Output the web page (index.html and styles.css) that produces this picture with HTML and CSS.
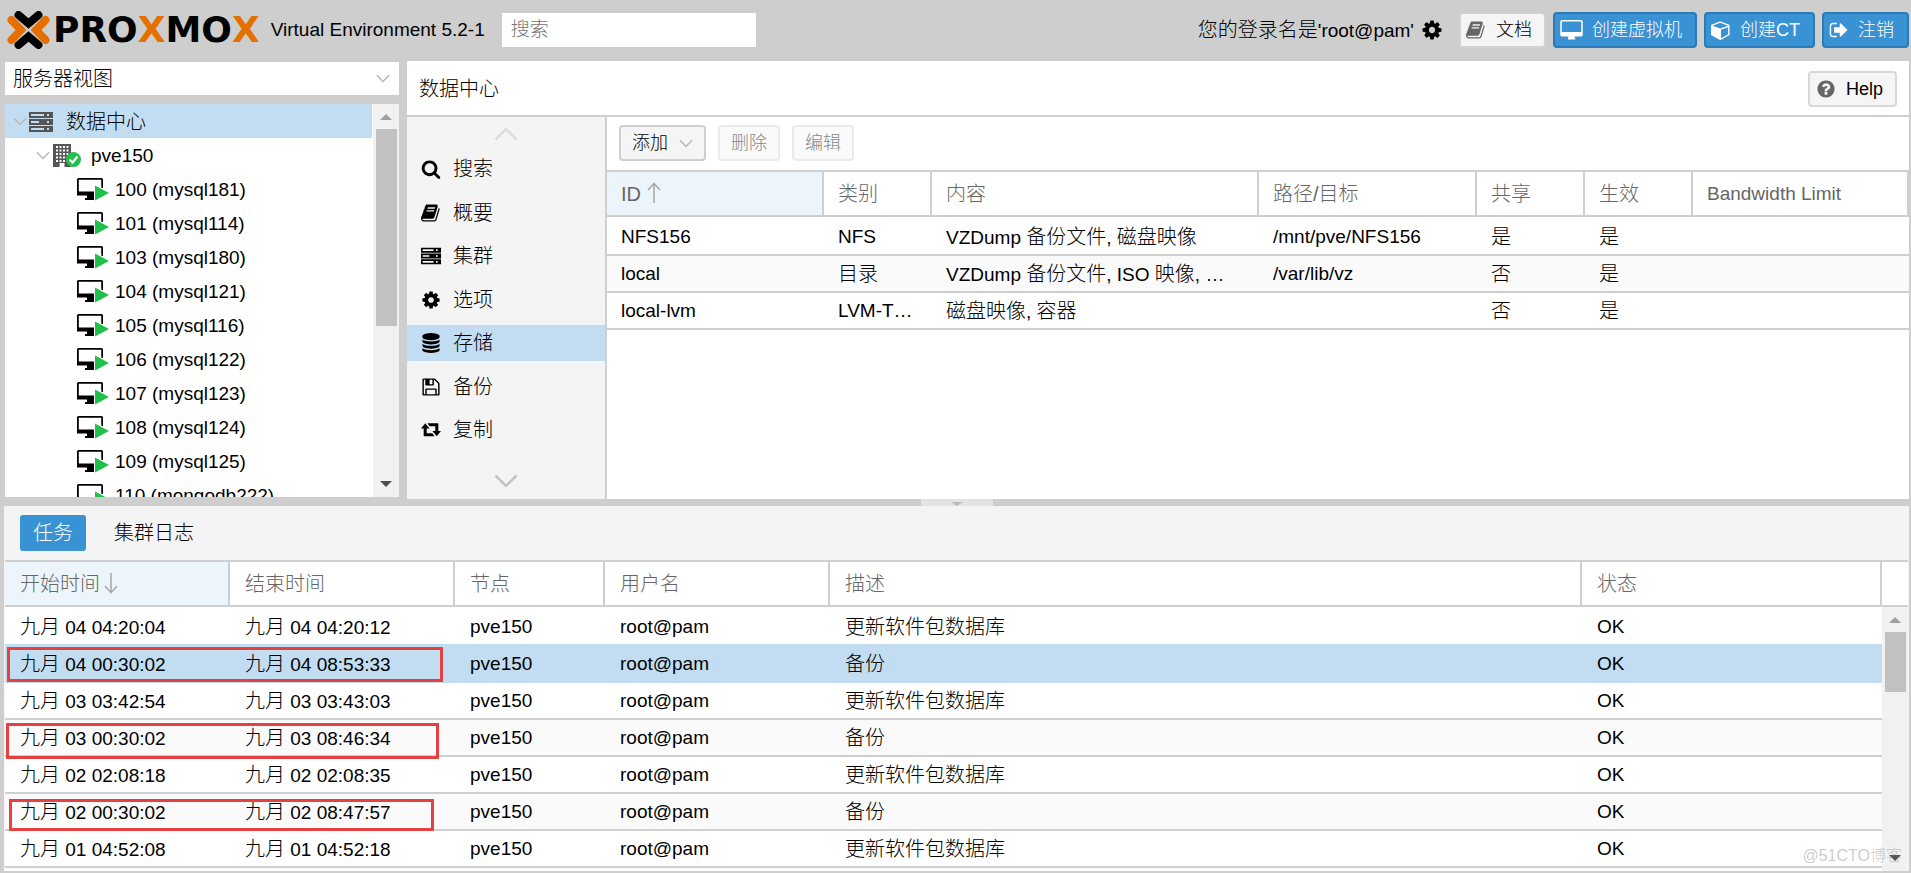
FILE: index.html
```html
<!DOCTYPE html>
<html lang="zh-CN">
<head>
<meta charset="utf-8">
<meta name="viewport" content="width=device-width, initial-scale=1">
<title>Proxmox Virtual Environment</title>
<link rel="stylesheet" href="styles.css">
</head>
<body>
<svg class="sprite" aria-hidden="true">
  <symbol id="i-cog" viewBox="0 0 1792 1792"><path d="M1152 896q0-106-75-181t-181-75-181 75-75 181 75 181 181 75 181-75 75-181zm512-109v222q0 12-8 23t-20 13l-185 28q-19 54-39 91 35 50 107 138 10 12 10 25t-9 23q-27 37-99 108t-94 71q-12 0-26-9l-138-108q-44 23-91 38-16 136-29 186-7 28-36 28h-222q-14 0-24.5-8.5t-11.5-21.5l-28-184q-49-16-90-37l-141 107q-10 9-25 9-14 0-25-11-126-114-165-168-7-10-7-23 0-12 8-23 15-21 51-66.5t54-70.5q-27-50-41-99l-183-27q-13-2-21-12.5t-8-23.5v-222q0-12 8-23t19-13l186-28q14-46 39-92-40-57-107-138-10-12-10-24 0-10 9-23 26-36 98.5-107.5t94.5-71.5q13 0 26 10l138 107q44-23 91-38 16-136 29-186 7-28 36-28h222q14 0 24.5 8.5t11.5 21.5l28 184q49 16 90 37l142-107q9-9 24-9 13 0 25 10 129 119 165 170 7 8 7 22 0 12-8 23-15 21-51 66.5t-54 70.5q26 50 41 98l183 28q13 2 21 12.5t8 23.5z"/></symbol>
  <symbol id="i-book" viewBox="0 0 1792 1792"><path d="M1639 478q40 57 18 129l-275 906q-19 64-76.5 107.5t-122.5 43.5h-923q-77 0-148.5-53.5t-99.5-131.5q-24-67-2-127 0-4 3-27t4-37q1-8-3-21.5t-3-19.5q2-11 8-21t16.5-23.5 16.5-23.5q23-38 45-91.5t30-91.5q3-10 .5-30t-.5-28q3-11 17-28t17-23q21-36 42-92t25-90q1-9-2.5-32t.5-28q4-13 22-30.5t22-22.5q19-26 42.5-84.5t27.5-96.5q1-8-3-25.5t-2-26.5q2-8 9-18t18-23 17-21q8-12 16.5-30.5t15-35 16-36 19.5-32 26.5-23.5 36-11.5 47.5 5.5l-1 3q38-9 51-9h761q74 0 114 56t18 130l-274 906q-36 119-71.5 153.5t-128.5 34.5h-869q-27 0-38 15-11 16-1 43 24 70 144 70h923q29 0 56-15.5t35-41.5l300-987q7-22 5-57 38 15 59 43zm-1064 2q-4 13 2 22.5t20 9.5h608q13 0 25.5-9.5t16.5-22.5l21-64q4-13-2-22.5t-20-9.5h-608q-13 0-25.5 9.5t-16.5 22.5zm-83 256q-4 13 2 22.5t20 9.5h608q13 0 25.5-9.5t16.5-22.5l21-64q4-13-2-22.5t-20-9.5h-608q-13 0-25.5 9.5t-16.5 22.5z"/></symbol>
  <symbol id="i-desktop" viewBox="-64 0 1920 1792"><path d="M1728 992v-832q0-13-9.5-22.5t-22.5-9.5h-1600q-13 0-22.5 9.5t-9.5 22.5v832q0 13 9.5 22.5t22.5 9.5h1600q13 0 22.5-9.5t9.5-22.5zm128-832v1088q0 66-47 113t-113 47h-544q0 37 16 77.5t32 71 16 43.5q0 26-19 45t-45 19h-512q-26 0-45-19t-19-45q0-14 16-44t32-70 16-78h-544q-66 0-113-47t-47-113v-1088q0-66 47-113t113-47h1600q66 0 113 47t47 113z"/></symbol>
  <symbol id="i-cube" viewBox="0 0 1792 1792"><path d="M896 1629l640-349v-636l-640 233v752zm-64-865l698-254-698-254-698 254zm832-252v768q0 35-18 65t-49 47l-704 384q-28 16-61 16t-61-16l-704-384q-31-17-49-47t-18-65v-768q0-40 23-73t61-47l704-256q22-8 44-8t44 8l704 256q38 14 61 47t23 73z"/></symbol>
  <symbol id="i-signout" viewBox="0 0 1792 1792"><path d="M704 1440q0 4 1 20t.5 26.5-3 23.5-10 19.5-20.5 6.5h-320q-119 0-203.5-84.5t-84.5-203.5v-704q0-119 84.5-203.5t203.5-84.5h320q13 0 22.5 9.5t9.5 22.5q0 4 1 20t.5 26.5-3 23.5-10 19.5-20.5 6.5h-320q-66 0-113 47t-47 113v704q0 66 47 113t113 47h312l11.5 1 11.5 3 8 5.5 7 9 2 13.5zm928-544q0 26-19 45l-544 544q-19 19-45 19t-45-19-19-45v-288h-448q-26 0-45-19t-19-45v-384q0-26 19-45t45-19h448v-288q0-26 19-45t45-19 45 19l544 544q19 19 19 45z"/></symbol>
  <symbol id="i-question" viewBox="0 0 1792 1792"><path d="M1024 1376v-192q0-14-9-23t-23-9h-192q-14 0-23 9t-9 23v192q0 14 9 23t23 9h192q14 0 23-9t9-23zm256-672q0-88-55.5-163t-138.5-116-170-41q-243 0-371 213-15 24 8 42l132 100q7 6 19 6 16 0 25-12 53-68 86-92 34-24 86-24 48 0 85.5 26t37.5 59q0 38-20 61t-68 45q-63 28-115.5 86.5t-52.5 125.5v36q0 14 9 23t23 9h192q14 0 23-9t9-23q0-19 21.5-49.5t54.5-49.5q32-18 49-28.5t46-35 44.5-48 28-60.5 12.5-81zm384 192q0 209-103 385.5t-279.5 279.5-385.5 103-385.5-103-279.5-279.5-103-385.5 103-385.5 279.5-279.5 385.5-103 385.5 103 279.5 279.5 103 385.5z"/></symbol>
  <symbol id="i-search" viewBox="0 0 1792 1792"><path d="M1216 832q0-185-131.5-316.5t-316.5-131.5-316.5 131.5-131.5 316.5 131.5 316.5 316.5 131.5 316.5-131.5 131.5-316.5zm512 832q0 52-38 90t-90 38q-54 0-90-38l-343-342q-179 124-399 124-143 0-273.5-55.5t-225-150-150-225-55.5-273.5 55.5-273.5 150-225 225-150 273.5-55.5 273.5 55.5 225 150 150 225 55.5 273.5q0 220-124 399l343 343q37 37 37 90z"/></symbol>
  <symbol id="i-database" viewBox="0 0 1792 1792"><path d="M896 768q237 0 443-43t325-127v170q0 69-103 128t-280 93.5-385 34.5-385-34.5-280-93.5-103-128v-170q119 84 325 127t443 43zm0 768q237 0 443-43t325-127v170q0 69-103 128t-280 93.5-385 34.5-385-34.5-280-93.5-103-128v-170q119 84 325 127t443 43zm0-384q237 0 443-43t325-127v170q0 69-103 128t-280 93.5-385 34.5-385-34.5-280-93.5-103-128v-170q119 84 325 127t443 43zm0-1152q208 0 385 34.5t280 93.5 103 128v128q0 69-103 128t-280 93.5-385 34.5-385-34.5-280-93.5-103-128v-128q0-69 103-128t280-93.5 385-34.5z"/></symbol>
  <symbol id="i-floppy" viewBox="0 0 1792 1792"><path d="M512 1536h768v-384h-768v384zm896 0h128v-896q0-14-10-38.5t-20-34.5l-281-281q-10-10-34-20t-39-10v416q0 40-28 68t-68 28h-576q-40 0-68-28t-28-68v-416h-128v1280h128v-416q0-40 28-68t68-28h832q40 0 68 28t28 68v416zm-384-928v-320q0-13-9.5-22.5t-22.5-9.5h-192q-13 0-22.5 9.5t-9.5 22.5v320q0 13 9.5 22.5t22.5 9.5h192q13 0 22.5-9.5t9.5-22.5zm640 32v928q0 40-28 68t-68 28h-1344q-40 0-68-28t-28-68v-1344q0-40 28-68t68-28h928q40 0 88 20t76 48l280 280q28 28 48 76t20 88z"/></symbol>
  <symbol id="i-server" viewBox="0 0 24 20"><path fill-rule="evenodd" d="M0 0h24v6H0zM2 2v2h13V2zM18 2v2h2V2zM0 7h24v6H0zM2 9v2h8V9zM18 9v2h2V9zM0 14h24v6H0zM2 16v2h13v-2zM18 16v2h2v-2z"/></symbol>
  <symbol id="i-retweet" viewBox="0 0 21 14"><path d="M4.500 0L9 5.500H6V10.500H12L14.200 13.500H3.500Q2.800 13.500 2.800 12.800V5.500H0zM16.500 13.500L12 8H15V3H9L6.800 0H17.500Q18.200 0 18.200 .7V8H21z"/></symbol>
  <symbol id="i-chevron" viewBox="0 0 24 14"><path d="M1.500 1.500L12 12 22.500 1.500" fill="none" stroke="currentColor" stroke-width="2.500"/></symbol>
  <symbol id="i-sort" viewBox="0 0 14 22"><path d="M7 21V2M1 8L7 1.500 13 8" fill="none" stroke="#aaa" stroke-width="1.600"/></symbol>
  <symbol id="i-node" viewBox="0 0 28 24"><path fill="#555" d="M0 0h18v23H0z"/><path d="M4 2v16M7.500 2v16M11 2v16M14.500 2v16" stroke="#fff" stroke-width="2" stroke-dasharray="2 1.500"/><path fill="#fff" d="M6.500 19h5v4h-5z"/><circle cx="20.500" cy="15.500" r="7.500" fill="#21bf4b"/><path d="M16.500 15.500l3 3 5-6" fill="none" stroke="#fff" stroke-width="2.200"/></symbol>
  <symbol id="i-vm" viewBox="0 0 32 24"><path fill-rule="evenodd" d="M1.500 0h23Q26 0 26 1.500V17.500H17V20h1.500v2H8v-2h2V17.500H0V1.500Q0 0 1.500 0zM1.800 1.800V13.500H24.500V1.800z"/><path fill="#fff" d="M17 6l4 0 5 3v13h-9z"/><path d="M25.200 2v8" stroke="#000" stroke-width="1.500"/><path fill="#21bf4b" d="M18 7.500L32 15 18 22.500z"/></symbol>
</svg>

<header class="topbar">
  <a class="logo" href="#" aria-label="Proxmox">
    <svg class="logo-mark" viewBox="0 0 43 38" fill="none" stroke-width="8" stroke-linecap="round" stroke-linejoin="miter">
      <path stroke="#e57000" d="M4.500 9L14 19 4.500 29M38.500 9L29 19 38.500 29"/>
      <path stroke="#000" d="M11.500 4L21.500 12.500 31.500 4M11.500 34L21.500 25.500 31.500 34"/>
    </svg>
    <span class="logo-word">PRO<b>X</b>MO<b>X</b></span>
  </a>
  <span class="version">Virtual Environment 5.2-1</span>
  <input class="search" type="text" placeholder="搜索" aria-label="搜索">
  <div class="session">
    <span class="login"><span class="zh">您的登录名是</span>'root@pam'</span>
    <svg class="ico ico-cog"><use href="#i-cog"/></svg>
  </div>
  <button class="btn btn-doc"><svg class="ico"><use href="#i-book"/></svg>文档</button>
  <button class="btn btn-blue"><svg class="ico ico-wide"><use href="#i-desktop"/></svg>创建虚拟机</button>
  <button class="btn btn-blue"><svg class="ico"><use href="#i-cube"/></svg>创建CT</button>
  <button class="btn btn-blue"><svg class="ico"><use href="#i-signout"/></svg>注销</button>
</header>

<main class="workspace">
  <aside class="sidebar">
    <button class="view-select" aria-haspopup="listbox"><span>服务器视图</span><svg class="chev"><use href="#i-chevron"/></svg></button>
    <div class="tree-box">
      <ul class="tree">
        <li class="lvl0 selected"><svg class="chev"><use href="#i-chevron"/></svg><svg class="t-server"><use href="#i-server"/></svg><span class="zh">数据中心</span></li>
        <li class="lvl1"><svg class="chev"><use href="#i-chevron"/></svg><svg class="t-node"><use href="#i-node"/></svg>pve150</li>
        <li class="lvl2"><svg class="t-vm"><use href="#i-vm"/></svg>100 (mysql181)</li>
        <li class="lvl2"><svg class="t-vm"><use href="#i-vm"/></svg>101 (mysql114)</li>
        <li class="lvl2"><svg class="t-vm"><use href="#i-vm"/></svg>103 (mysql180)</li>
        <li class="lvl2"><svg class="t-vm"><use href="#i-vm"/></svg>104 (mysql121)</li>
        <li class="lvl2"><svg class="t-vm"><use href="#i-vm"/></svg>105 (mysql116)</li>
        <li class="lvl2"><svg class="t-vm"><use href="#i-vm"/></svg>106 (mysql122)</li>
        <li class="lvl2"><svg class="t-vm"><use href="#i-vm"/></svg>107 (mysql123)</li>
        <li class="lvl2"><svg class="t-vm"><use href="#i-vm"/></svg>108 (mysql124)</li>
        <li class="lvl2"><svg class="t-vm"><use href="#i-vm"/></svg>109 (mysql125)</li>
        <li class="lvl2"><svg class="t-vm"><use href="#i-vm"/></svg>110 (mongodb222)</li>
      </ul>
      <div class="scrollbar"><i class="arrow up"></i><i class="thumb thumb-tree"></i><i class="arrow down"></i></div>
    </div>
  </aside>

  <section class="content">
    <div class="titlebar"><h1>数据中心</h1><button class="btn btn-help"><svg class="ico"><use href="#i-question"/></svg>Help</button></div>
    <div class="content-body">
      <nav class="menu">
        <svg class="menu-scroll faded"><use href="#i-chevron"/></svg>
        <ul>
          <li><a href="#"><svg class="ico"><use href="#i-search"/></svg>搜索</a></li>
          <li><a href="#"><svg class="ico"><use href="#i-book"/></svg>概要</a></li>
          <li><a href="#"><svg class="ico"><use href="#i-server"/></svg>集群</a></li>
          <li><a href="#"><svg class="ico"><use href="#i-cog"/></svg>选项</a></li>
          <li><a href="#" class="selected"><svg class="ico"><use href="#i-database"/></svg>存储</a></li>
          <li><a href="#"><svg class="ico"><use href="#i-floppy"/></svg>备份</a></li>
          <li><a href="#"><svg class="ico"><use href="#i-retweet"/></svg>复制</a></li>
        </ul>
        <svg class="menu-scroll"><use href="#i-chevron"/></svg>
      </nav>
      <div class="storage">
        <div class="toolbar">
          <button class="btn btn-add">添加<svg class="chev"><use href="#i-chevron"/></svg></button>
          <button class="btn" disabled>删除</button>
          <button class="btn" disabled>编辑</button>
        </div>
        <table class="grid grid-storage">
          <colgroup><col class="w-id"><col class="w-flag"><col class="w-content"><col class="w-path"><col class="w-flag"><col class="w-flag"><col></colgroup>
          <thead><tr><th class="sorted">ID<svg class="sort"><use href="#i-sort"/></svg></th><th>类别</th><th>内容</th><th>路径/目标</th><th>共享</th><th>生效</th><th><span class="latin">Bandwidth Limit</span></th></tr></thead>
          <tbody>
            <tr><td>NFS156</td><td>NFS</td><td>VZDump <span class="zh">备份文件</span>, <span class="zh">磁盘映像</span></td><td>/mnt/pve/NFS156</td><td><span class="zh">是</span></td><td><span class="zh">是</span></td><td></td></tr>
            <tr><td>local</td><td><span class="zh">目录</span></td><td>VZDump <span class="zh">备份文件</span>, ISO <span class="zh">映像</span>, …</td><td>/var/lib/vz</td><td><span class="zh">否</span></td><td><span class="zh">是</span></td><td></td></tr>
            <tr><td>local-lvm</td><td>LVM-T…</td><td><span class="zh">磁盘映像</span>, <span class="zh">容器</span></td><td></td><td><span class="zh">否</span></td><td><span class="zh">是</span></td><td></td></tr>
          </tbody>
        </table>
      </div>
    </div>
  </section>
</main>

<div class="splitter"><button class="grip" aria-label="折叠"><svg viewBox="0 0 14 5"><path d="M0 0h14L7 5z" fill="#bbb"/></svg></button></div>

<section class="log">
  <div class="tabs"><button class="tab active">任务</button><button class="tab">集群日志</button></div>
  <div class="log-body">
    <div class="log-table">
      <table class="grid grid-log">
        <colgroup><col class="w-time"><col class="w-time"><col class="w-node"><col class="w-user"><col><col class="w-status"></colgroup>
        <thead><tr><th class="sorted">开始时间<svg class="sort desc"><use href="#i-sort"/></svg></th><th>结束时间</th><th>节点</th><th>用户名</th><th>描述</th><th>状态</th></tr></thead>
        <tbody>
          <tr class="before-selected"><td><span class="zh">九月</span> 04 04:20:04</td><td><span class="zh">九月</span> 04 04:20:12</td><td>pve150</td><td>root@pam</td><td><span class="zh">更新软件包数据库</span></td><td>OK</td></tr>
          <tr class="selected"><td><span class="zh">九月</span> 04 00:30:02</td><td><span class="zh">九月</span> 04 08:53:33</td><td>pve150</td><td>root@pam</td><td><span class="zh">备份</span></td><td>OK</td></tr>
          <tr><td><span class="zh">九月</span> 03 03:42:54</td><td><span class="zh">九月</span> 03 03:43:03</td><td>pve150</td><td>root@pam</td><td><span class="zh">更新软件包数据库</span></td><td>OK</td></tr>
          <tr><td><span class="zh">九月</span> 03 00:30:02</td><td><span class="zh">九月</span> 03 08:46:34</td><td>pve150</td><td>root@pam</td><td><span class="zh">备份</span></td><td>OK</td></tr>
          <tr><td><span class="zh">九月</span> 02 02:08:18</td><td><span class="zh">九月</span> 02 02:08:35</td><td>pve150</td><td>root@pam</td><td><span class="zh">更新软件包数据库</span></td><td>OK</td></tr>
          <tr><td><span class="zh">九月</span> 02 00:30:02</td><td><span class="zh">九月</span> 02 08:47:57</td><td>pve150</td><td>root@pam</td><td><span class="zh">备份</span></td><td>OK</td></tr>
          <tr><td><span class="zh">九月</span> 01 04:52:08</td><td><span class="zh">九月</span> 01 04:52:18</td><td>pve150</td><td>root@pam</td><td><span class="zh">更新软件包数据库</span></td><td>OK</td></tr>
        </tbody>
      </table>
    </div>
    <div class="log-side">
      <div class="side-head"></div>
      <div class="scrollbar"><i class="arrow up"></i><i class="thumb thumb-log"></i><i class="arrow down"></i></div>
    </div>
    <div class="mark mark-a"></div>
    <div class="mark mark-b"></div>
    <div class="mark mark-c"></div>
    <div class="watermark">@51CTO博客</div>
  </div>
</section>
</body>
</html>
```

FILE: styles.css
```css
:root {
  --frame: #cecece;
  --line: #cfcfcf;
  --pick: #c2ddf2;
  --soft: #f4f4f4;
  --blue: #3892d4;
}
* { box-sizing: border-box; }
body {
  margin: 0;
  height: 100vh;
  display: flex;
  flex-direction: column;
  overflow: hidden;
  padding: 0 2px 2px 4px;
  background: var(--frame);
  color: #000;
  font: 300 19px/26px "Liberation Sans", "Noto Sans CJK SC", sans-serif;
}
button, input { font: inherit; color: inherit; }
ul { list-style: none; margin: 0; padding: 0; }
a { color: inherit; text-decoration: none; }
.sprite { position: absolute; width: 0; height: 0; }
.ico { width: 20px; height: 20px; flex: none; fill: currentColor; }
.chev { width: 14px; height: 9px; flex: none; color: #b8b8b8; }
.zh { font-size: 20px; }

/* top bar */
.topbar { flex: none; height: 61px; display: flex; align-items: center; padding-bottom: 1px; }
.logo { display: flex; align-items: center; gap: 3px; margin-left: 3px; }
.logo-mark { width: 43px; height: 38px; }
.logo-word { font: bold 36px/38px "DejaVu Sans", sans-serif; }
.logo-word b { color: #e57000; }
.version { margin-left: 11px; white-space: nowrap; }
.search { width: 254px; height: 34px; margin-left: 17px; padding: 0 9px; border: 0; background: #fff; }
.search::placeholder { color: #757575; opacity: 1; }
.session { margin-left: auto; display: flex; align-items: center; gap: 7px; white-space: nowrap; }
.ico-cog { width: 22px; height: 22px; }
.btn {
  display: flex; align-items: center; flex: none; height: 36px;
  padding: 0 11px; border: 2px solid #d8d8d8; border-radius: 4px;
  background: #f5f5f5; font-size: 18px; white-space: nowrap;
}
.btn:disabled { background: #fafafa; border-color: #ebebeb; color: #888; }
.btn-doc { margin: 0 7px 0 16px; border-color: #d2d2d2; padding: 0 12px 0 5px; gap: 10px; }
.btn-doc .ico, .btn-help .ico { color: #666; }
.btn-blue { border-color: #2b7bb9; background: var(--blue); color: #fff; padding: 0 13px 0 5px; gap: 9px; }
.btn-blue .ico-wide { width: 23px; height: 21px; }
.btn-blue + .btn-blue { margin-left: 7px; }

/* workspace */
.workspace { flex: 438 1 0; min-height: 0; display: flex; gap: 8px; }
.sidebar { width: 395px; flex: none; display: flex; flex-direction: column; gap: 9px; padding: 1px 0 2px 1px; }
.view-select {
  flex: none; height: 33px; display: flex; align-items: center; justify-content: space-between;
  padding: 0 9px 0 8px; border: 0; background: #fff; font-size: 20px;
}
.tree-box { flex: 1; min-height: 0; display: flex; background: #fff; overflow: hidden; }
.tree { flex: 1; padding-right: 1px; }
.tree li { display: flex; align-items: center; height: 34px; padding-top: 1px; white-space: nowrap; }
.tree .selected { background: var(--pick); }
.lvl0 { padding-left: 8px; }
.lvl1 { padding-left: 31px; }
.lvl2 { padding-left: 72px; }
.t-server { width: 24px; height: 20px; margin: 0 13px 0 2px; fill: #555; }
.t-node { width: 28px; height: 24px; margin: 0 10px 0 3px; }
.t-vm { width: 32px; height: 24px; margin-right: 6px; }
.scrollbar { width: 26px; flex: none; display: flex; flex-direction: column; align-items: center; background: #f1f1f1; }
.arrow { width: 0; height: 0; border: 6px solid transparent; }
.arrow.up { border-top: 0; border-bottom-color: #a0a0a0; margin: 10px 0 9px; }
.arrow.down { border-bottom: 0; border-top-color: #505050; margin: auto 0 10px; }
.thumb { width: 21px; background: #c1c1c1; }
.thumb-tree { height: 50%; }
.thumb-log { height: 60px; }

.content { flex: 1; min-width: 0; display: flex; flex-direction: column; background: #fff; }
.titlebar {
  flex: none; height: 56px; display: flex; align-items: center; justify-content: space-between;
  padding: 1px 12px 0; border-bottom: 2px solid var(--line);
}
h1 { margin: 0; font-size: 20px; font-weight: inherit; }
.btn-help { padding: 0 12px 0 6px; gap: 10px; }
.content-body { flex: 1; min-height: 0; display: flex; }
.menu {
  width: 200px; flex: none; display: flex; flex-direction: column; align-items: center;
  background: var(--soft); border-right: 2px solid var(--line); padding: 10px 0 11px;
}
.menu-scroll { width: 24px; height: 14px; flex: none; color: #c4c4c4; }
.menu-scroll.faded { color: #ddd; transform: rotate(180deg); }
.menu ul { flex: 1; align-self: stretch; display: flex; flex-direction: column; justify-content: space-between; padding: 10px 0 26px; }
.menu a { display: flex; align-items: center; gap: 12px; height: 36px; padding-left: 14px; font-size: 20px; }
.menu a.selected { background: var(--pick); }

.storage { flex: 1; min-width: 0; }
.toolbar { display: flex; gap: 12px; padding: 8px 12px 9px; }
.btn-add { gap: 11px; border-color: #cfcfcf; }

/* grids */
.grid { width: 100%; table-layout: fixed; border-collapse: separate; border-spacing: 0; }
.grid th, .grid td { padding: 0 0 0 14px; text-align: left; overflow: hidden; white-space: nowrap; text-overflow: ellipsis; }
.grid th {
  height: 47px; font-weight: inherit; font-size: 20px; color: #666;
  border: 2px solid var(--line); border-left: 0;
}
.grid th .latin { font-size: 19px; }
.grid th.sorted { background: #edf5fc; }
.grid td { height: 37px; padding-top: 1px; border-bottom: 2px solid var(--line); }
.grid tbody tr:first-child td { height: 39px; border-top: 2px solid #fff; }
.grid tbody tr:nth-child(even) td { background: #fafafa; }
.grid tbody tr.before-selected td { border-bottom-color: var(--pick); }
.grid tbody tr.selected td { background: var(--pick); border-bottom-color: var(--pick); }
.grid-log th, .grid-log td { padding-left: 15px; }
.sort { width: 14px; height: 22px; margin-left: 6px; vertical-align: -3px; }
.sort.desc { transform: rotate(180deg); margin-left: 4px; }
.w-id { width: 217px; }
.w-flag { width: 108px; }
.w-content { width: 327px; }
.w-path { width: 218px; }
.w-time, .w-user { width: 225px; }
.w-node { width: 150px; }
.w-status { width: 300px; }

/* splitter */
.splitter { flex: none; height: 7px; display: flex; justify-content: center; }
.grip { width: 72px; height: 7px; display: flex; justify-content: center; padding: 3px 0 0; border: 0; background: #e2e2e2; }
.grip svg { width: 14px; height: 4px; }

/* task log */
.log { flex: 365 1 0; min-height: 0; display: flex; flex-direction: column; background: var(--soft); }
.tabs { flex: none; display: flex; gap: 16px; padding: 9px 16px; height: 54px; }
.tab { height: 36px; padding: 0 12px; border: 0; border-radius: 3px; background: none; font-size: 20px; }
.tab.active { background: var(--blue); color: #fff; padding: 0 13px; }
.log-body { position: relative; flex: 1; min-height: 0; display: flex; background: #fff; margin: 0 1px; overflow: hidden; }
.log-table { flex: 1; min-width: 0; overflow: hidden; }
.log-side { width: 26px; flex: none; display: flex; flex-direction: column; }
.side-head { flex: none; height: 47px; border: solid var(--line); border-width: 2px 0; }
.log-side .scrollbar { flex: 1; }
.mark { position: absolute; border: 3px solid #e64141; }
.mark-a { left: 2px; top: 87px; width: 436px; height: 35px; }
.mark-b { left: 1px; top: 163px; width: 433px; height: 36px; }
.mark-c { left: 4px; top: 239px; width: 425px; height: 32px; }
.watermark { position: absolute; right: 6px; bottom: 2px; font-size: 16px; color: rgba(120, 120, 120, .4); }
```
